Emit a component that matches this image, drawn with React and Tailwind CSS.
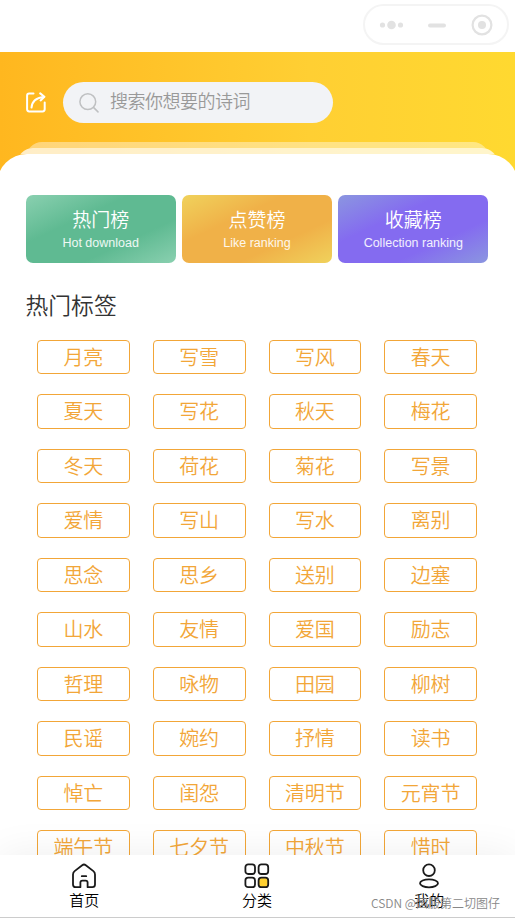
const rankings = [
  {
    title: "热门榜",
    subtitle: "Hot download",
    color: "bg-[linear-gradient(155deg,#8ad0b0_0%,#5fba92_35%,#5fba92_68%,#8ad0b0_100%)]",
  },
  {
    title: "点赞榜",
    subtitle: "Like ranking",
    color: "bg-[linear-gradient(155deg,#f0d25c_0%,#f0b148_35%,#f0b148_68%,#f0d25c_100%)]",
  },
  {
    title: "收藏榜",
    subtitle: "Collection ranking",
    color: "bg-[linear-gradient(155deg,#8b96e0_0%,#846bf0_35%,#846bf0_68%,#8b96e0_100%)]",
  },
];

const tags = [
  "月亮", "写雪", "写风", "春天",
  "夏天", "写花", "秋天", "梅花",
  "冬天", "荷花", "菊花", "写景",
  "爱情", "写山", "写水", "离别",
  "思念", "思乡", "送别", "边塞",
  "山水", "友情", "爱国", "励志",
  "哲理", "咏物", "田园", "柳树",
  "民谣", "婉约", "抒情", "读书",
  "悼亡", "闺怨", "清明节", "元宵节",
  "端午节", "七夕节", "中秋节", "惜时",
];

const HomeIcon = () => (
  <svg width="26" height="26" viewBox="0 0 26 26" fill="none" stroke="#1a1a1a" strokeWidth="1.8" strokeLinejoin="round" strokeLinecap="round">
    <path d="M9.4 24.2H4.6Q2 24.2 2 21.6V11.4Q2 9.4 3.6 8.1L11.2 2.2Q13 .8 14.8 2.2l7.6 5.9Q24 9.4 24 11.4v10.2q0 2.6-2.6 2.6h-4.8v-4.6q0-2-2-2h-3.2q-2 0-2 2z" />
    <path d="M10.8 13.2h4.4" />
  </svg>
);

const CategoryIcon = () => (
  <svg width="26" height="26" viewBox="0 0 26 26" fill="none" stroke="#1a1a1a" strokeWidth="1.8">
    <rect x="1.4" y="1.4" width="9.6" height="9.6" rx="2.8" />
    <rect x="14.6" y="1.4" width="9.6" height="9.6" rx="2.8" />
    <rect x="1.4" y="14.6" width="9.6" height="9.6" rx="2.8" />
    <rect x="14.6" y="14.6" width="9.6" height="9.6" rx="2.8" fill="#ffd030" />
  </svg>
);

const UserIcon = () => (
  <svg width="26" height="26" viewBox="0 0 26 26" fill="none" stroke="#1a1a1a" strokeWidth="1.8">
    <circle cx="13" cy="7.2" r="5.8" />
    <ellipse cx="13" cy="20.3" rx="9" ry="4" />
  </svg>
);

const ShareIcon = () => (
  <svg className="shrink-0" width="20" height="21" viewBox="0 0 20 21" fill="none" stroke="#fff" strokeWidth="2" strokeLinecap="round" strokeLinejoin="round">
    <path d="M7.5 1.6H3.2Q1.1 1.6 1.1 3.7v13.6q0 2.1 2.1 2.1h13.4q2.1 0 2.1-2.1V10.5" />
    <path d="M5.5 15.6Q6.2 6.3 17.6 5" />
    <path d="M14.2 1.4 18.4 4.8 14.6 8.4" />
  </svg>
);

const SearchIcon = () => (
  <svg className="shrink-0" width="20" height="20" viewBox="0 0 20 20" fill="none" stroke="#bfc0c2" strokeWidth="1.5" strokeLinecap="round">
    <circle cx="8.8" cy="8.7" r="7.9" />
    <path d="M14.5 14.4 19 18.9" />
  </svg>
);

const tabs = [
  { label: "首页", icon: HomeIcon, offset: "pr-[3px]" },
  { label: "分类", icon: CategoryIcon, offset: "pr-px" },
  { label: "我的", icon: UserIcon, offset: "" },
];

const App = () => {
  return (
    <div className="relative flex h-[918px] w-[515px] flex-col overflow-hidden bg-white font-['Liberation_Sans','Noto_Sans_CJK_SC',sans-serif] font-[350]">
      <div className="flex h-[52px] shrink-0 justify-end pt-[4px] pr-[6px]">
        <div className="flex h-[41px] w-[146px] items-center rounded-full border-2 border-[#f4f4f4] pl-[14px]">
          <svg className="shrink-0" width="115" height="24" viewBox="0 0 115 24" fill="#e2e2e2">
            <circle cx="3.5" cy="12" r="2.6" />
            <circle cx="12.5" cy="12" r="4.3" />
            <circle cx="21.5" cy="12" r="2.6" />
            <rect x="49" y="10.5" width="18" height="4" rx="2" />
            <circle cx="103" cy="12" r="9.4" fill="none" stroke="#e2e2e2" strokeWidth="2.2" />
            <circle cx="103" cy="12" r="4" />
          </svg>
        </div>
      </div>

      <div className="flex min-h-0 flex-1 flex-col bg-[linear-gradient(90deg,#ffb71f_0%,#ffcf33_60%,#ffd930_100%)] pt-[30px]">
        <div className="flex h-[41px] shrink-0 items-center gap-[17px] pl-[26px]">
          <ShareIcon />
          <div className="flex h-[41px] w-[270px] items-center gap-[11px] rounded-full bg-[#f2f3f6] pl-[16px] text-[18px] tracking-[-0.5px] text-[#999]">
            <SearchIcon />
            <span>搜索你想要的诗词</span>
          </div>
        </div>

        {/* stacked sheets peeking out above the main panel */}
        <div className="mx-[26px] mt-[19px] h-[6px] shrink-0 overflow-hidden">
          <div className="h-[20px] rounded-t-[16px] bg-white/40" />
        </div>
        <div className="mx-[17px] h-[6px] shrink-0 overflow-hidden">
          <div className="h-[20px] rounded-t-[16px] bg-white/75" />
        </div>

        <div className="-mx-[3px] min-h-0 flex-1 overflow-hidden rounded-t-[30px] bg-white pt-[41px] pr-[29.5px] pl-[28.5px]">
          <div className="grid grid-cols-3 gap-[6px]">
            {rankings.map((item) => (
              <div
                key={item.title}
                className={`flex h-[68px] flex-col items-center rounded-[7px] pt-[11px] text-white ${item.color}`}
              >
                <div className="text-[19px] leading-[30px]">{item.title}</div>
                <div className="text-[12.5px] leading-[15px] text-white/90">{item.subtitle}</div>
              </div>
            ))}
          </div>

          <h2 className="mt-[26px] text-[22.8px] leading-[35px] text-[#333]">热门标签</h2>

          <div className="mt-[16px] grid grid-cols-4 gap-y-[20px]">
            {tags.map((tag) => (
              <div
                key={tag}
                className="mx-[11.5px] h-[34.45px] rounded-[4px] border border-[#f2a638] text-center text-[20px] leading-[34px] text-[#f2a638]"
              >
                {tag}
              </div>
            ))}
          </div>
        </div>
      </div>

      <nav className="relative grid h-[63px] shrink-0 grid-cols-3 border-b border-[#ccc] bg-white pt-[8px] shadow-[0_0_40px_rgba(0,0,0,0.07)]">
        {tabs.map(({ label, icon: Icon, offset }) => (
          <div key={label} className={`flex flex-col items-center ${offset}`}>
            <Icon />
            <span className="mt-[2px] text-[15px] leading-[19px] text-black">{label}</span>
          </div>
        ))}
      </nav>

      <div className="absolute right-[15px] bottom-[6px] font-['Noto_Sans_CJK_SC',sans-serif] text-[12px] leading-[18px] whitespace-nowrap text-[#888]">
        CSDN @国服第二切图仔
      </div>
    </div>
  );
};

export default App;
